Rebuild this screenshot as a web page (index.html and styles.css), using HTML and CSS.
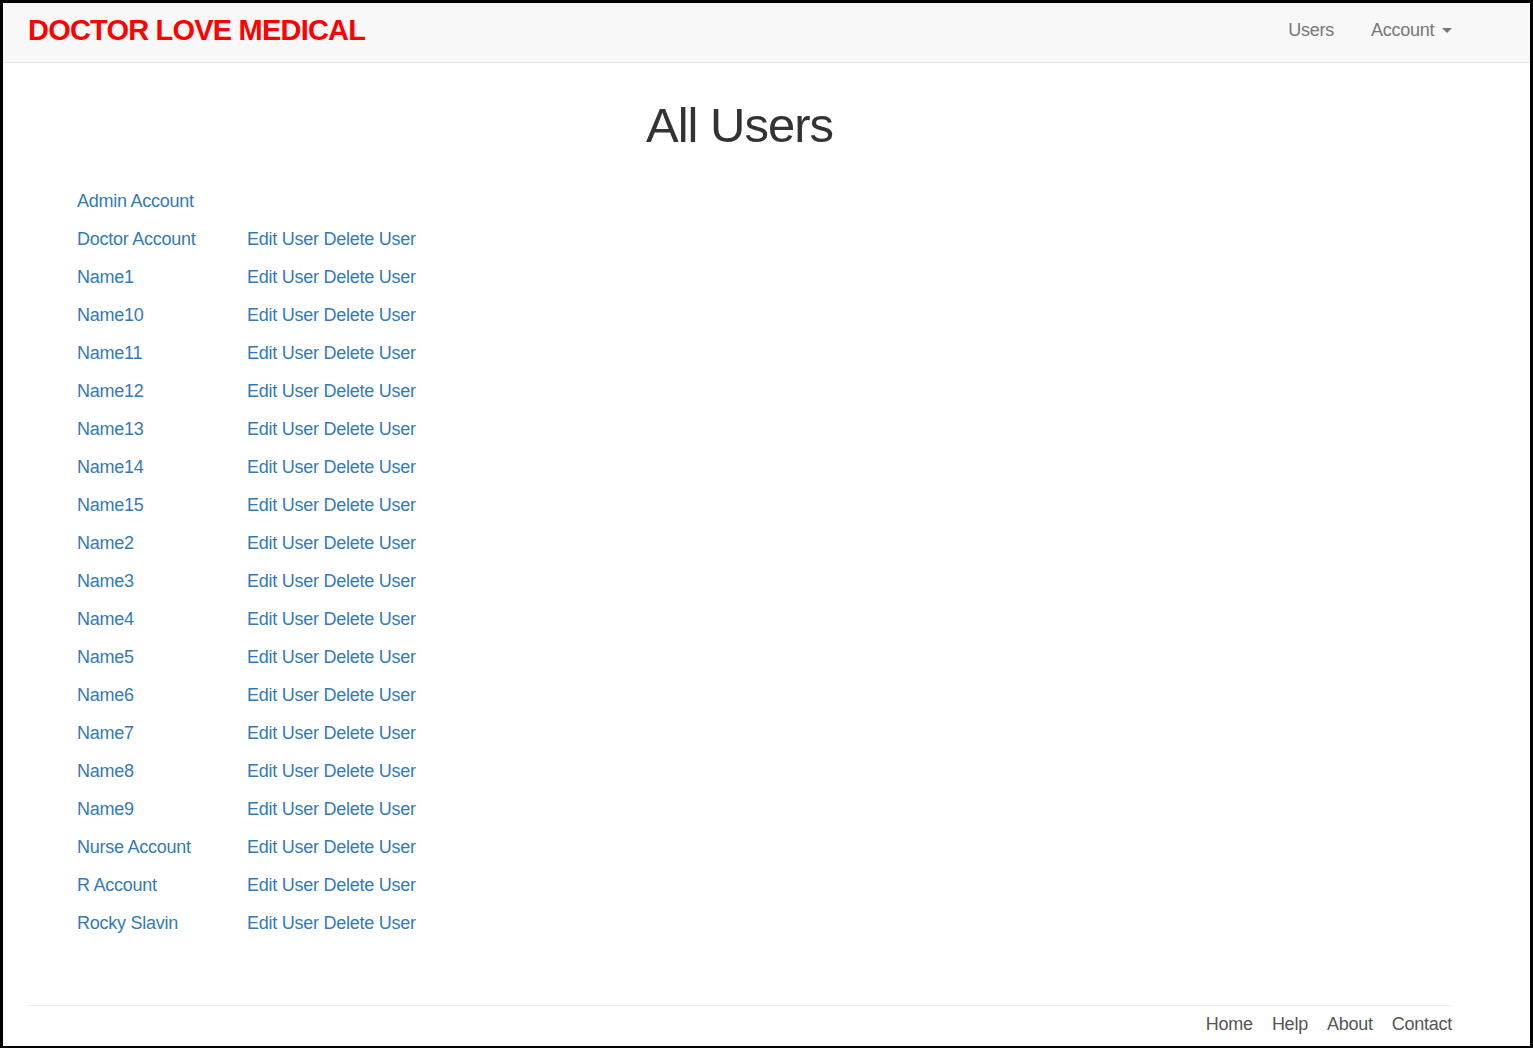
FILE: index.html
```html
<!DOCTYPE html>
<html lang="en">
<head>
<meta charset="utf-8">
<title>All Users</title>
<link rel="stylesheet" href="styles.css">
</head>
<body>
<div class="frame">
  <nav class="navbar">
    <div class="nav-inner">
      <a class="brand" href="#">DOCTOR LOVE MEDICAL</a>
      <ul class="nav-links">
        <li><a href="#">Users</a></li>
        <li><a href="#">Account <span class="caret"></span></a></li>
      </ul>
    </div>
  </nav>
  <main class="container">
    <h1 class="title">All Users</h1>
    <div class="user-table">
      <div class="row"><a href="#">Admin Account</a><span></span></div>
      <div class="row"><a href="#">Doctor Account</a><span><a href="#">Edit User</a> <a href="#">Delete User</a></span></div>
      <div class="row"><a href="#">Name1</a><span><a href="#">Edit User</a> <a href="#">Delete User</a></span></div>
      <div class="row"><a href="#">Name10</a><span><a href="#">Edit User</a> <a href="#">Delete User</a></span></div>
      <div class="row"><a href="#">Name11</a><span><a href="#">Edit User</a> <a href="#">Delete User</a></span></div>
      <div class="row"><a href="#">Name12</a><span><a href="#">Edit User</a> <a href="#">Delete User</a></span></div>
      <div class="row"><a href="#">Name13</a><span><a href="#">Edit User</a> <a href="#">Delete User</a></span></div>
      <div class="row"><a href="#">Name14</a><span><a href="#">Edit User</a> <a href="#">Delete User</a></span></div>
      <div class="row"><a href="#">Name15</a><span><a href="#">Edit User</a> <a href="#">Delete User</a></span></div>
      <div class="row"><a href="#">Name2</a><span><a href="#">Edit User</a> <a href="#">Delete User</a></span></div>
      <div class="row"><a href="#">Name3</a><span><a href="#">Edit User</a> <a href="#">Delete User</a></span></div>
      <div class="row"><a href="#">Name4</a><span><a href="#">Edit User</a> <a href="#">Delete User</a></span></div>
      <div class="row"><a href="#">Name5</a><span><a href="#">Edit User</a> <a href="#">Delete User</a></span></div>
      <div class="row"><a href="#">Name6</a><span><a href="#">Edit User</a> <a href="#">Delete User</a></span></div>
      <div class="row"><a href="#">Name7</a><span><a href="#">Edit User</a> <a href="#">Delete User</a></span></div>
      <div class="row"><a href="#">Name8</a><span><a href="#">Edit User</a> <a href="#">Delete User</a></span></div>
      <div class="row"><a href="#">Name9</a><span><a href="#">Edit User</a> <a href="#">Delete User</a></span></div>
      <div class="row"><a href="#">Nurse Account</a><span><a href="#">Edit User</a> <a href="#">Delete User</a></span></div>
      <div class="row"><a href="#">R Account</a><span><a href="#">Edit User</a> <a href="#">Delete User</a></span></div>
      <div class="row"><a href="#">Rocky Slavin</a><span><a href="#">Edit User</a> <a href="#">Delete User</a></span></div>
    </div>
    <footer class="footer">
      <a href="#">Home</a>
      <a href="#">Help</a>
      <a href="#">About</a>
      <a href="#">Contact</a>
    </footer>
  </main>
</div>
</body>
</html>
```
FILE: styles.css
```css
* { box-sizing: border-box; }
html, body { margin: 0; padding: 0; }
body {
  font-family: "Liberation Sans", Arial, sans-serif;
  font-size: 18px;
  letter-spacing: -0.25px;
  color: #333;
  background: #fff;
}
a { text-decoration: none; color: #337ab7; }
.frame {
  width: 1533px;
  height: 1048px;
  border-style: solid;
  border-color: #000;
  border-width: 3px 3px 2px 3px;
  overflow: hidden;
}
.navbar {
  height: 60px;
  background: #f8f8f8;
  border-bottom: 1px solid #e7e7e7;
}
.nav-inner {
  height: 100%;
  display: flex;
  align-items: center;
  justify-content: space-between;
  padding: 0 78px 4px 25px;
}
.brand {
  color: #ff0000;
  font-weight: bold;
  font-size: 29px;
  letter-spacing: -0.8px;
}
.nav-links {
  list-style: none;
  margin: 0 0 1px 0;
  padding: 0;
  display: flex;
  gap: 37px;
}
.nav-links a { color: #777; }
.caret {
  display: inline-block;
  width: 0;
  height: 0;
  margin-left: 3px;
  vertical-align: middle;
  border-top: 5px solid #777;
  border-left: 5px solid transparent;
  border-right: 5px solid transparent;
}
.container {
  margin-left: 24px;
  width: 1425px;
  padding-top: 35px;
}
.title {
  margin: 0;
  text-align: center;
  font-weight: 500;
  font-size: 49px;
  letter-spacing: -1px;
  line-height: 54px;
  color: #333;
}
.user-table {
  margin-top: 30px;
  padding-left: 50px;
}
.row {
  display: grid;
  grid-template-columns: 170px auto;
  height: 38px;
  line-height: 38px;
}
.footer {
  margin-top: 63px;
  border-top: 1px solid #eee;
  padding-top: 6px;
  display: flex;
  justify-content: flex-end;
  gap: 19px;
  line-height: 25px;
}
.footer a { color: #555; }
```
